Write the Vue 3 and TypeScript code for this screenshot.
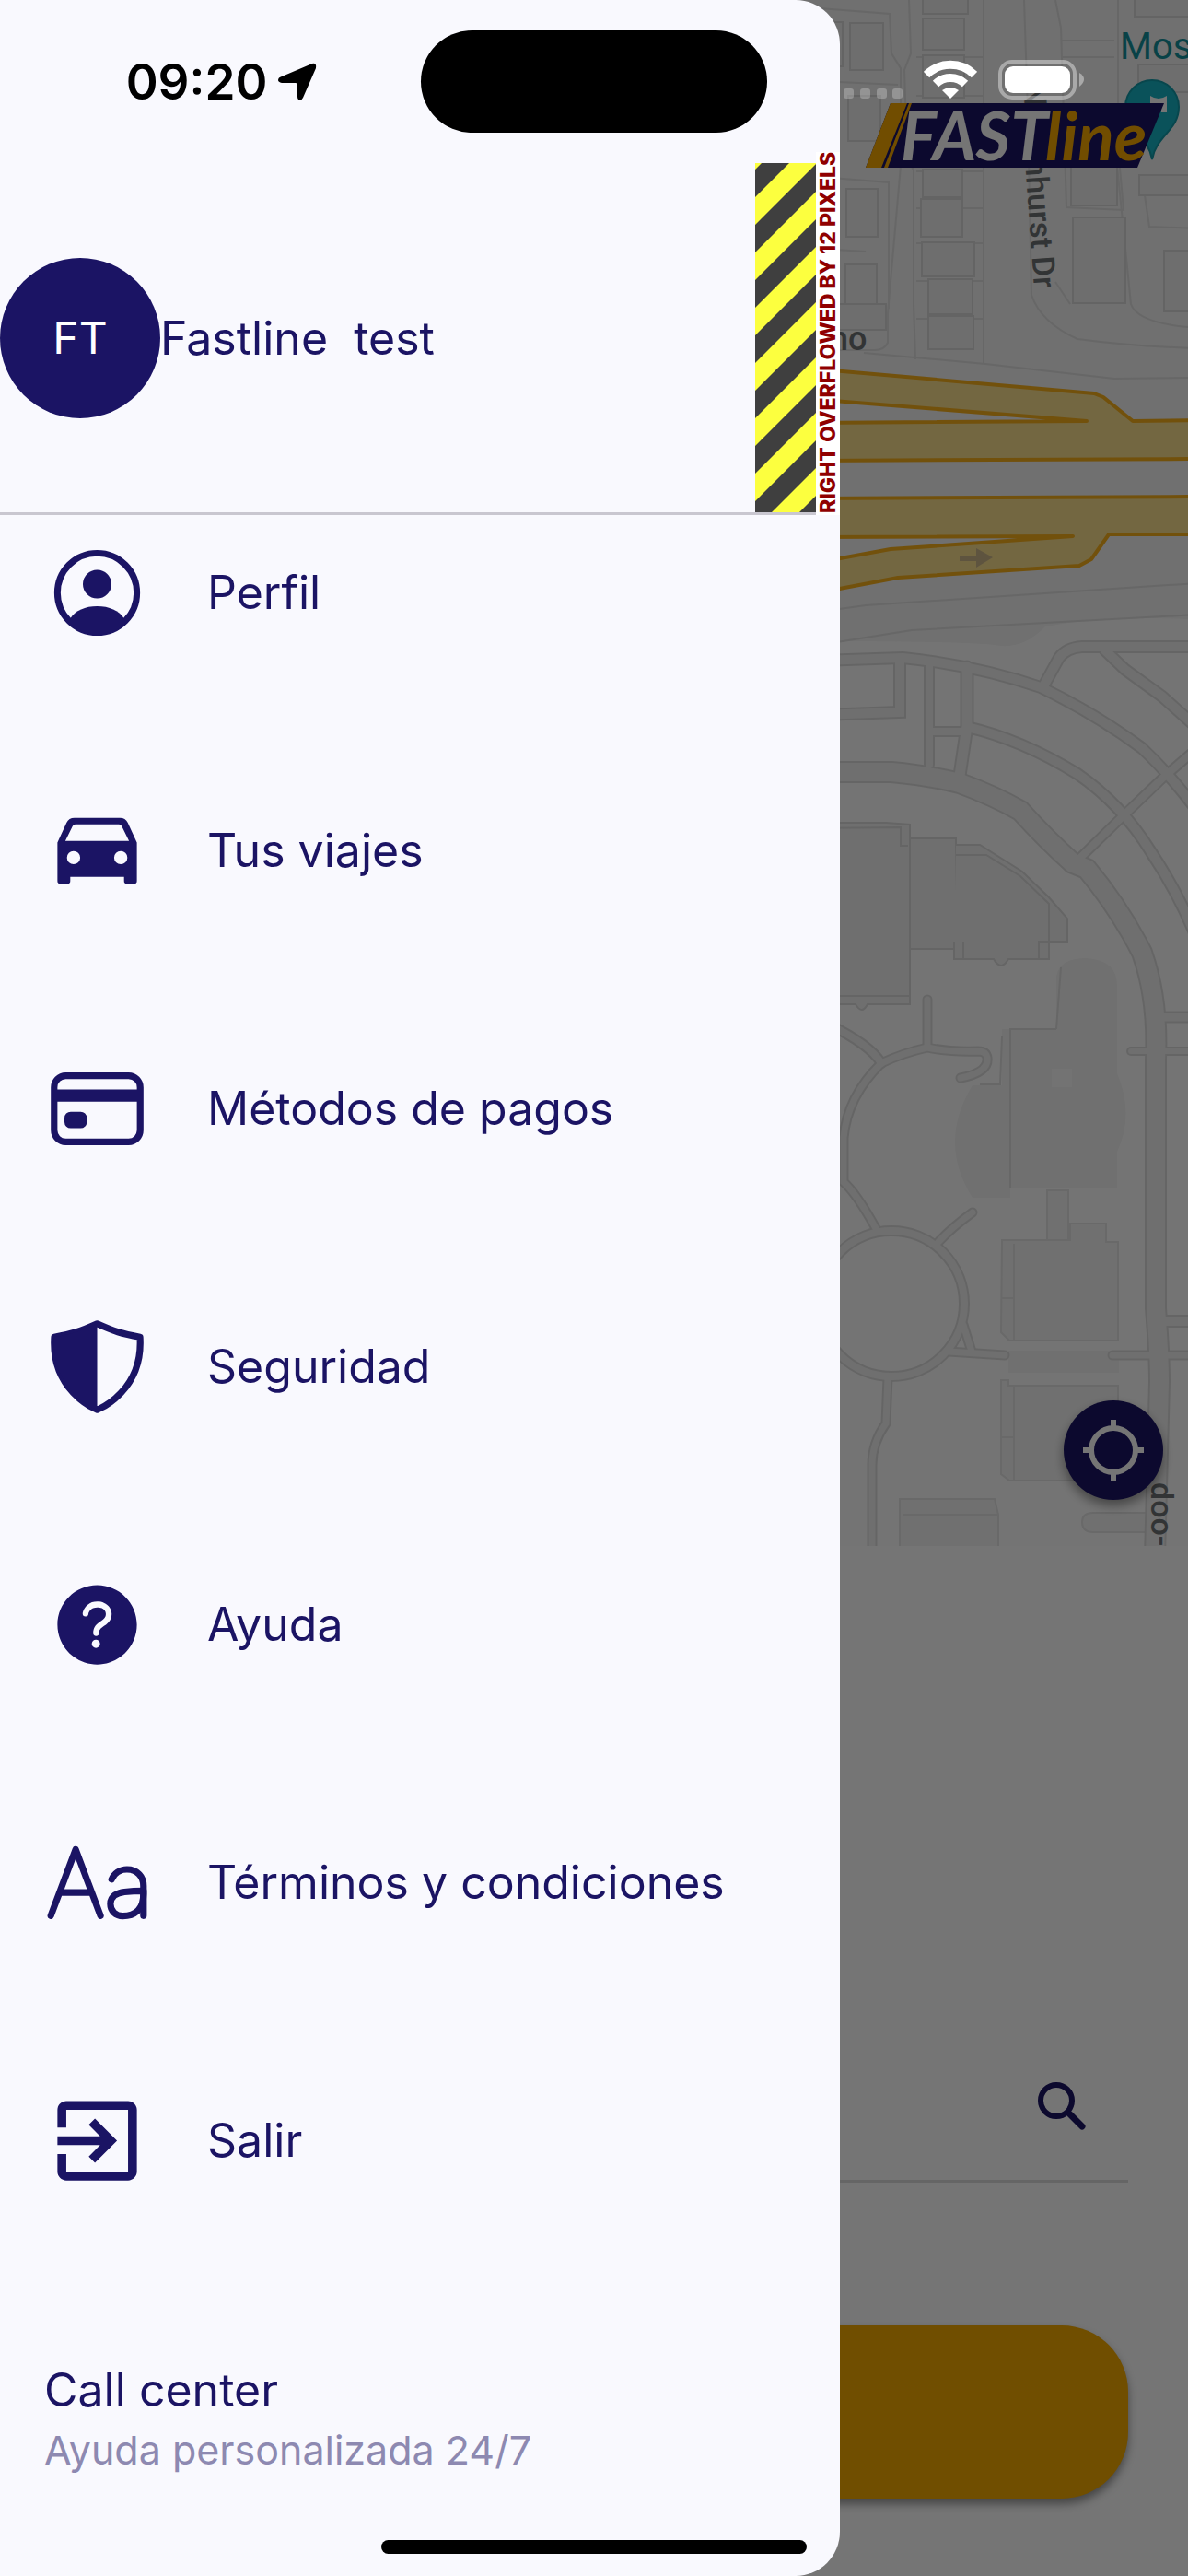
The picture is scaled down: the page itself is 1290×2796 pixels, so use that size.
<script setup lang="ts">
interface MenuItem {
  id: string
  label: string
}

const userName = 'Fastline  test'

const menu: MenuItem[] = [
  { id: 'profile', label: 'Perfil' },
  { id: 'trips', label: 'Tus viajes' },
  { id: 'payments', label: 'Métodos de pagos' },
  { id: 'security', label: 'Seguridad' },
  { id: 'help', label: 'Ayuda' },
  { id: 'terms', label: 'Términos y condiciones' },
  { id: 'exit', label: 'Salir' },
]

// Streets are drawn twice: a wide casing first, then a lighter fill over it.
const streets: { d: string; width: number }[] = [
  { d: 'M890 717L980 714Q1060 722 1130 746Q1190 775 1240 812Q1270 840 1300 880', width: 10 },
  { d: 'M1133 745L1150 714Q1158 703 1175 702H1300', width: 10 },
  { d: 'M1200 706L1222 727L1262 756L1300 790', width: 10 },
  { d: 'M1050 789Q1110 803 1170 840Q1218 873 1250 925Q1280 970 1300 1020', width: 10 },
  { d: 'M890 776L977 773V716', width: 10 },
  { d: 'M1009 718V830', width: 8 },
  { d: 'M1011 794H1048', width: 8 },
  { d: 'M1050 724V788L1042 842', width: 11 },
  { d: 'M1300 812L1262 845L1216 889L1172 932', width: 8 },
  { d: 'M890 838H968Q1010 842 1042 850Q1080 864 1108 880Q1135 910 1165 937L1180 943Q1215 985 1240 1034Q1258 1085 1255 1150V1420Q1259 1470 1259 1500L1254 1690', width: 20 },
  { d: 'M1262 1104H1300', width: 9 },
  { d: 'M1228 1141H1300', width: 6 },
  { d: 'M1266 1434H1300', width: 10 },
  { d: 'M1208 1471H1300', width: 7 },
  { d: 'M900 1112Q945 1134 957 1154', width: 8 },
  { d: 'M1043 1170Q1074 1164 1072 1148Q1071 1141 1062 1141Q1030 1142 1007 1137Q980 1143 957 1154Q920 1190 916 1235V1283Q930 1295 952 1335', width: 7 },
  { d: 'M1007 1085V1136', width: 7 },
  { d: 'M889 1415A79 79 0 1 1 1047 1415A79 79 0 1 1 889 1415', width: 8 },
  { d: 'M1019 1348Q1034 1332 1056 1316', width: 7 },
  { d: 'M1030 1467L1091 1471', width: 7 },
  { d: 'M1046 1438L1055 1467', width: 7 },
  { d: 'M964 1495L962 1545Q947 1566 947 1590V1690', width: 7 },
]

const houses: number[][] = [
  [1002, -10, 49, 25], [1002, 20, 45, 34], [1002, 60, 45, 46], [1002, 184, 43, 30],
  [1000, 216, 45, 41], [1001, 263, 57, 37], [1008, 303, 48, 38], [923, 25, 36, 51],
  [921, 104, 35, 49], [919, 205, 34, 52], [918, 287, 34, 50], [1163, 150, 50, 73],
  [1165, 236, 57, 93], [1008, 343, 49, 36], [1237, 190, 60, 22], [1264, 272, 40, 66],
  [1232, -8, 66, 26], [1236, 70, 60, 30], [895, 24, 20, 48], [880, 330, 82, 28],
]

const signalDots = [0, 18, 36, 53]
</script>

<template>
  <div class="app">
    <main class="ride">
      <section class="map-area">
        <svg class="map" viewBox="0 0 1290 1678" role="img" aria-label="Mapa">
          <rect width="1290" height="1678" fill="#f3f3f3" />
          <path d="M0 704Q1000 690 1080 700Q1110 706 1135 680Q1200 668 1290 672V1678H0Z" fill="#fdfdfd" />

          <g fill="none" stroke="#e0e0e0" stroke-width="2">
            <path d="M890 9L966 15L968 58L978 74V180L964 340V372Q960 380 950 380H890" />
            <path d="M987 0L989 58L982 76L985 170L992 185V330L994 390" />
            <path d="M890 192L965 198V335M890 88L975 92M890 270L940 273" />
            <path d="M1068 0V395M1112 0L1116 120L1120 320Q1130 350 1170 368Q1230 376 1300 378" />
            <path d="M1146 0L1152 30L1158 225L1220 228L1214 160V0" />
            <path d="M1212 170L1228 330Q1235 350 1290 355M1240 192L1248 246L1300 248" />
            <path d="M1146 306L1162 330M1152 44H1210M1152 62H1210M995 62H1068M995 104H1068M995 186H1068M995 226H1068M995 264H1068M995 305H1068M995 346H1068" />
            <path d="M938 383L1070 395L1210 411L1300 410" />
            <path d="M890 664L940 657L1300 633M890 700L990 684L1300 667" />
          </g>
          <g fill="#f0f0f0" stroke="#dadada" stroke-width="2">
            <rect v-for="(h, i) in houses" :key="i" :x="h[0]" :y="h[1]" :width="h[2]" :height="h[3]" />
          </g>

          <g fill="#fae08f" stroke="#f9b01c" stroke-width="4" stroke-linejoin="round">
            <path d="M880 400L1188 427L1198 431L1230 457L1300 456V498L880 500V459L1180 457L880 433Z" />
            <path d="M880 541L1300 539V580H1204L1185 607L1172 614L975 627L880 645V612L967 596L1165 582L880 583Z" />
          </g>
          <path d="M1042 604H1060V595L1078 605L1060 616V609H1042Z" fill="#cdb78a" />

          <g fill="#f2f2f2" stroke="#dcdcdc" stroke-width="2">
            <path d="M880 893H962L988 895V1090H942Q936 1102 929 1090H880Z" />
            <path d="M880 899L978 898V918H986M880 1081H988" />
            <rect x="988" y="910" width="50" height="120" />
            <path d="M1038 917H1064L1110 946L1139 974L1159 997V1022H1139V1041H1095Q1087 1055 1079 1041H1036V1022" />
            <path d="M1038 928H1071L1108 951L1139 981V1022M1046 1022V1041M1128 1041V1022H1139" />
          </g>
          <path d="M1147 1117V1060Q1150 1040 1180 1040Q1213 1042 1213 1070V1165Q1232 1210 1213 1250V1290H1097V1300H1056Q1018 1240 1056 1178H1088V1117Z" fill="#f4f4f4" />
          <path d="M1147 1117H1097V1290M1147 1117L1152 1050M1088 1125L1086 1177H1064" fill="none" stroke="#e0e0e0" stroke-width="2" />
          <rect x="1142" y="1160" width="22" height="20" fill="#fafafa" />
          <g fill="#f4f4f4" stroke="#e4e4e4" stroke-width="2">
            <rect x="1137" y="1292" width="23" height="54" />
            <path d="M1088 1346H1162V1328H1201V1348H1214V1455H1096L1087 1446Z" />
            <path d="M1101 1350V1455M1088 1409H1101" />
            <path d="M1087 1498H1095V1504H1214V1607H1096L1087 1600Z" />
            <path d="M1101 1504V1607M1087 1560H1101" />
            <path d="M977 1678V1627H1080L1084 1644V1678" />
            <path d="M980 1644H1084" />
            <path d="M1245 1642H1187Q1175 1642 1175 1652Q1175 1663 1187 1663H1245Z" />
          </g>
          <rect x="1095" y="1466" width="120" height="24" fill="#f5f5f5" />

          <g fill="none" stroke="#dddddd" stroke-linecap="round">
            <path v-for="s in streets" :key="s.d" :d="s.d" :stroke-width="s.width + 4" />
          </g>
          <g fill="none" stroke="#f2f2f2" stroke-linecap="round">
            <path v-for="s in streets" :key="s.d" :d="s.d" :stroke-width="s.width" />
          </g>

          <path d="M1251 173C1246 145 1222 142 1222 116A29 29 0 0 1 1280 116C1280 142 1256 146 1251 173Z" fill="#16b4c4" stroke="#129aa8" stroke-width="2" />
          <path d="M1249 104Q1258 110 1267 104V122H1261V114H1255V122H1249Z" fill="#ffffff" />
          <g class="map-text">
            <text x="1216" y="64" font-size="40" font-weight="400" fill="#13909b">Mos</text>
            <text x="901" y="380" font-size="36" fill="#6d7275">no</text>
            <text transform="translate(1111 92) rotate(86)" font-size="34" fill="#6d7275">N</text>
            <text transform="translate(1113 173) rotate(86)" font-size="34" fill="#6d7275">nhurst Dr</text>
            <text transform="translate(1250 1609) rotate(90)" font-size="34" fill="#6d7275">doo-</text>
          </g>
        </svg>

        <svg class="logo" viewBox="0 0 324 70" role="img" aria-label="FASTline">
          <path d="M27 0H324L295 70H0Z" fill="#1b1464" />
          <path d="M27 0H45L17 70H0ZM47 0H50L24 70H20Z" fill="#f7a900" />
          <g class="logo-text">
            <text x="38" y="62" fill="#ffffff">FAST</text>
            <text x="195" y="62" fill="#f7a900">line</text>
          </g>
        </svg>

        <button class="locate" type="button" aria-label="Mi ubicación">
          <svg viewBox="0 0 68 68" fill="none" stroke="currentColor" stroke-width="6">
            <circle cx="34" cy="34" r="24" />
            <path d="M34 1V9M34 59V67M1 34H9M59 34H67" />
          </svg>
        </button>
      </section>

      <section class="sheet">
        <form class="search" @submit.prevent>
          <input type="text" aria-label="Destino" />
          <button type="submit" aria-label="Buscar">
            <svg viewBox="0 0 52 52" fill="none" stroke="currentColor" stroke-linecap="round">
              <circle cx="20" cy="20" r="17" stroke-width="6" />
              <path d="M35 35L48 48" stroke-width="7" />
            </svg>
          </button>
        </form>
        <button class="request" type="button" aria-label="Continuar"></button>
      </section>
    </main>

    <div class="scrim"></div>

    <aside class="drawer">
      <header class="account">
        <span class="avatar">FT</span>
        <span class="name">{{ userName }}</span>
        <svg class="stripes" aria-hidden="true">
          <defs>
            <pattern id="hazard" width="60" height="60" patternUnits="userSpaceOnUse">
              <rect width="60" height="60" fill="#3f3f3f" />
              <path d="M0 0H7L0 7ZM37 0H67L0 67V37ZM97 0H127L0 127V97Z" fill="#fcff3f" />
            </pattern>
          </defs>
          <rect width="100%" height="100%" fill="url(#hazard)" />
        </svg>
        <span class="overflow-note">RIGHT OVERFLOWED BY 12 PIXELS</span>
      </header>

      <nav class="menu">
        <a v-for="item in menu" :key="item.id" class="item" href="#">
          <svg v-if="item.id === 'profile'" class="icon" viewBox="0 0 512 512" fill="currentColor">
            <circle cx="256" cy="256" r="192" fill="none" stroke="currentColor" stroke-width="31" />
            <circle cx="256" cy="214" r="69" />
            <path d="M127 378C150 341 198 320 256 320S362 341 385 378L392 404Q334 456 256 456T120 404Z" />
          </svg>
          <svg v-else-if="item.id === 'trips'" class="icon" viewBox="0 0 512 512" fill="currentColor" fill-rule="evenodd">
            <path d="M64 216L108 120Q119 97 146 97H366Q393 97 404 120L448 216V402Q448 416 434 416H400Q386 416 386 402V382H126V402Q126 416 112 416H78Q64 416 64 402ZM102 208H410L375 137Q371 128 361 128H151Q141 128 137 137ZM142 257A32 32 0 1 0 142 321A32 32 0 1 0 142 257ZM370 257A32 32 0 1 0 370 321A32 32 0 1 0 370 257Z" />
          </svg>
          <svg v-else-if="item.id === 'payments'" class="icon" viewBox="0 0 512 512" fill="none" stroke="currentColor" stroke-linejoin="round">
            <rect x="48" y="96" width="416" height="320" rx="56" stroke-width="32" />
            <path d="M48 192H464M128 300H176V320H128Z" stroke-width="60" />
          </svg>
          <svg v-else-if="item.id === 'security'" class="icon" viewBox="0 0 512 512" fill="currentColor">
            <path d="M463.1 112.37C373.68 96.33 336.71 84.45 256 48c-80.71 36.45-117.68 48.33-207.1 64.37C32.7 369.13 240.58 457.79 256 464c15.42-6.21 223.3-94.87 207.1-351.63z" fill="none" stroke="currentColor" stroke-width="32" stroke-linejoin="round" />
            <path d="M256 48c-80.71 36.45-117.68 48.33-207.1 64.37C32.7 369.13 240.58 457.79 256 464z" />
          </svg>
          <svg v-else-if="item.id === 'help'" class="icon" viewBox="0 0 512 512" fill="currentColor">
            <path d="M256 64C150 64 64 150 64 256s86 192 192 192 192-86 192-192S362 64 256 64zm-6 304a20 20 0 1120-20 20 20 0 01-20 20zm33.44-102C267.23 276.88 265 286.85 265 296a14 14 0 01-28 0c0-21.91 10.08-39.33 30.82-53.26C287.1 229.8 298 221.6 298 203.57c0-12.26-7-21.57-21.49-28.46-3.41-1.62-11-3.2-20.34-3.09-11.72.15-20.82 2.95-27.83 8.59C215.12 191.25 214 202.83 214 203a14 14 0 11-28-1.35c.11-2.43 1.8-24.32 24.77-42.8 11.91-9.58 27.06-14.56 45-14.78 12.7-.15 24.63 2 32.72 5.82C312.7 161.34 326 180.43 326 203.57c0 33.83-22.61 49.02-42.56 62.43z" />
          </svg>
          <svg v-else-if="item.id === 'terms'" class="icon" viewBox="0 0 512 512" fill="none" stroke="currentColor" stroke-width="32" stroke-linecap="round" stroke-linejoin="round">
            <path d="M32 415.5l120-320 120 320M230 303.5H74M326 239.5c12.19-28.69 41-48 74-48h0c46 0 80 32 80 80v144" />
            <path d="M320 358.5c0 36 26.86 58 60 58 54 0 100-27 100-106v-15c-20 0-58 1-92 5-32.77 3.86-68 19-68 58z" />
          </svg>
          <svg v-else class="icon" viewBox="0 0 24 24" fill="currentColor">
            <path d="M10.09 15.59L11.5 17l5-5-5-5-1.41 1.41L12.67 11H3v2h9.67l-2.58 2.59zM19 3H5c-1.11 0-2 .9-2 2v4h2V5h14v14H5v-4H3v4c0 1.1.89 2 2 2h14c1.1 0 2-.9 2-2V5c0-1.1-.9-2-2-2z" />
          </svg>
          <span>{{ item.label }}</span>
        </a>
      </nav>

      <footer class="support">
        <a href="#">Call center</a>
        <small>Ayuda personalizada 24/7</small>
      </footer>
    </aside>

    <div class="status">
      <div class="clock">
        <time>09:20</time>
        <svg class="arrow" viewBox="0 0 42 42" aria-hidden="true">
          <path d="M37 1Q42 0 41 6L27 38Q25 42 22 40Q21 39 21 37V24Q21 22 19 22H4Q0 21 0 19Q0 16 4 15Z" />
        </svg>
      </div>
      <div class="island"></div>
      <div class="indicators">
        <svg width="64" height="43" aria-hidden="true">
          <rect v-for="x in signalDots" :key="x" :x="x" y="31" width="11" height="11" rx="3" fill="#ffffff" fill-opacity="0.25" />
        </svg>
        <svg width="58" height="43" fill="none" stroke="#ffffff" stroke-width="9" aria-hidden="true">
          <path d="M3 16A37 37 0 0 1 55 16M13 26A23 23 0 0 1 45 26" />
          <path d="M29 42L20 33Q29 27 38 33Z" fill="#ffffff" stroke="none" />
        </svg>
        <svg width="93" height="43" aria-hidden="true">
          <rect x="2" y="2" width="81" height="39" rx="13" fill="none" stroke="#ffffff" stroke-opacity="0.4" stroke-width="4" />
          <rect x="7" y="7" width="71" height="29" rx="9" fill="#ffffff" />
          <path d="M88 14Q93 17 93 21T88 29Z" fill="#ffffff" fill-opacity="0.4" />
        </svg>
      </div>
    </div>

    <div class="home-indicator"></div>
  </div>
</template>

<style>
body {
  margin: 0;
}
</style>

<style scoped>
.app {
  display: grid;
  grid-template-columns: minmax(0, 1fr);
  min-height: 100vh;
  overflow: hidden;
  font-family: Inter, "Liberation Sans", sans-serif;
  font-size: 50px;
  color: #1b1464;
}

/* Every layer of the screen shares the one grid cell and stacks in source order. */
.app > * {
  grid-area: 1 / 1;
  isolation: isolate;
}

button {
  padding: 0;
  border: 0;
  background: none;
  color: inherit;
}

a {
  color: inherit;
  text-decoration: none;
}

.ride {
  display: flex;
  flex-direction: column;
  background: #fefefe;
}

.map-area {
  position: relative;
}

.map {
  display: block;
  width: 100%;
}

.map-text {
  font-family: Roboto, sans-serif;
  font-weight: 500;
}

.logo {
  position: absolute;
  top: 112px;
  right: 26px;
  width: 324px;
  height: 70px;
  overflow: visible;
}

.logo-text {
  font: italic 700 73px Lato, sans-serif;
}

.locate {
  position: absolute;
  right: 27px;
  bottom: 50px;
  display: grid;
  place-items: center;
  width: 108px;
  height: 108px;
  border-radius: 50%;
  background: #1b1464;
  color: #ffffff;
  box-shadow: 0 6px 12px rgba(0, 0, 0, 0.4);
}

.locate svg {
  width: 68px;
  height: 68px;
}

.sheet {
  display: flex;
  flex: 1;
  flex-direction: column;
  justify-content: flex-end;
  gap: 155px;
  padding: 0 65px 84px;
}

.search {
  display: flex;
  align-items: center;
  height: 161px;
  padding-right: 46px;
  border-bottom: 3px solid #dcdcdc;
}

.search input {
  flex: 1;
  min-width: 0;
  height: 100%;
  border: 0;
  background: none;
  font: inherit;
}

.search svg {
  display: block;
  width: 52px;
  height: 52px;
}

.request {
  height: 188px;
  border-radius: 72px;
  background: #f4ab00;
  box-shadow: 0 6px 10px rgba(0, 0, 0, 0.4);
}

.scrim {
  background: rgba(0, 0, 0, 0.54);
}

.drawer {
  display: flex;
  flex-direction: column;
  box-sizing: border-box;
  width: 912px;
  max-width: 90%;
  padding-top: 177px;
  border-radius: 0 48px 48px 0;
  background: #f9f9fe;
}

.account {
  position: relative;
  display: flex;
  align-items: center;
  height: 379px;
  margin-right: 26px;
  border-bottom: 3px solid #c9c7d0;
}

.avatar {
  display: grid;
  place-items: center;
  width: 174px;
  height: 174px;
  border-radius: 50%;
  background: #1b1464;
  color: #ffffff;
  font-size: 48px;
}

.name {
  white-space: pre;
}

.stripes {
  width: 66px;
  height: 100%;
  margin-left: auto;
}

.overflow-note {
  position: absolute;
  bottom: -3px;
  left: 100%;
  display: flex;
  justify-content: flex-end;
  width: 26px;
  height: 394px;
  background: #ffffff;
  color: #900000;
  font-size: 23px;
  font-weight: 800;
  line-height: 26px;
  white-space: nowrap;
  writing-mode: vertical-rl;
  transform: rotate(180deg);
}

.menu {
  display: flex;
  flex-direction: column;
  gap: 112px;
}

.item {
  display: flex;
  align-items: center;
  gap: 62px;
  height: 168px;
  padding-left: 48px;
}

.icon {
  flex: none;
  width: 115px;
  height: 115px;
}

.support {
  display: flex;
  flex-direction: column;
  padding: 155px 48px 104px;
  line-height: 65px;
}

.support small {
  color: #8d89b1;
  font-size: 43px;
}

.status {
  display: grid;
  grid-template-columns: 1fr 376px 1fr;
  align-items: center;
  align-self: start;
  height: 111px;
  padding-top: 33px;
}

.clock {
  display: flex;
  align-items: center;
  justify-content: center;
  gap: 12px;
  padding-left: 24px;
  color: #000000;
  font-size: 53px;
  font-weight: 600;
}

.arrow {
  width: 42px;
  height: 42px;
}

.island {
  height: 111px;
  border-radius: 56px;
  background: #000000;
}

.indicators {
  display: flex;
  align-items: center;
  justify-content: flex-end;
  gap: 23px;
  padding: 0 113px 4px 0;
}

.home-indicator {
  align-self: end;
  justify-self: center;
  width: 462px;
  height: 15px;
  margin-bottom: 24px;
  border-radius: 8px;
  background: #000000;
}
</style>
